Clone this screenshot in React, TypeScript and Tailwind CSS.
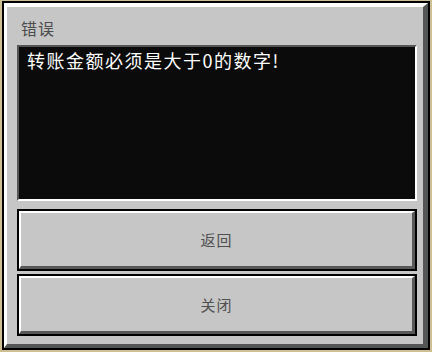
import React from "react";

const font = { fontFamily: '"Noto Sans CJK SC", "Noto Sans", sans-serif' };

const FormButton = ({ label }: { label: string }) => {
  return (
    <div className="h-[62px] border-2 border-black bg-[#c6c6c6]">
      <div className="h-full flex items-center justify-center border-t-2 border-l-2 border-white border-b-[3px] border-r-[3px] border-b-[#585858] border-r-[#585858]">
        <span className="text-[15px] leading-[20px] text-[#4f4f4f] tracking-[1px]">{label}</span>
      </div>
    </div>
  );
};

const App = () => {
  return (
    <div className="w-[432px] h-[352px] bg-[#cdbf92] pt-[1px] pl-[2px] pr-[2px] pb-[2px]" style={font}>
      <div className="h-full border-2 border-black bg-[#c6c6c6]">
        <div className="h-full flex flex-col border-t-4 border-l-[3px] border-white border-r-[5px] border-b-4 border-r-[#555555] border-b-[#555555] pt-[11px] pl-[10px] pr-[6px] pb-[8px]">
          <p className="h-[20px] text-[16px] leading-[20px] text-[#4c4c4c] tracking-[1px] pl-[4px]">错误</p>
          <div className="mt-[7px] h-[156px] bg-[#0b0b0b] border-2 border-t-[#555555] border-l-[#555555] border-b-white border-r-white pt-[2px] pl-[8px]">
            <p className="text-[18px] leading-[22px] text-white tracking-[1.5px]">转账金额必须是大于0的数字!</p>
          </div>
          <div className="mt-[8px] flex flex-col gap-[3px]">
            <FormButton label="返回" />
            <FormButton label="关闭" />
          </div>
        </div>
      </div>
    </div>
  );
};

export default App;
